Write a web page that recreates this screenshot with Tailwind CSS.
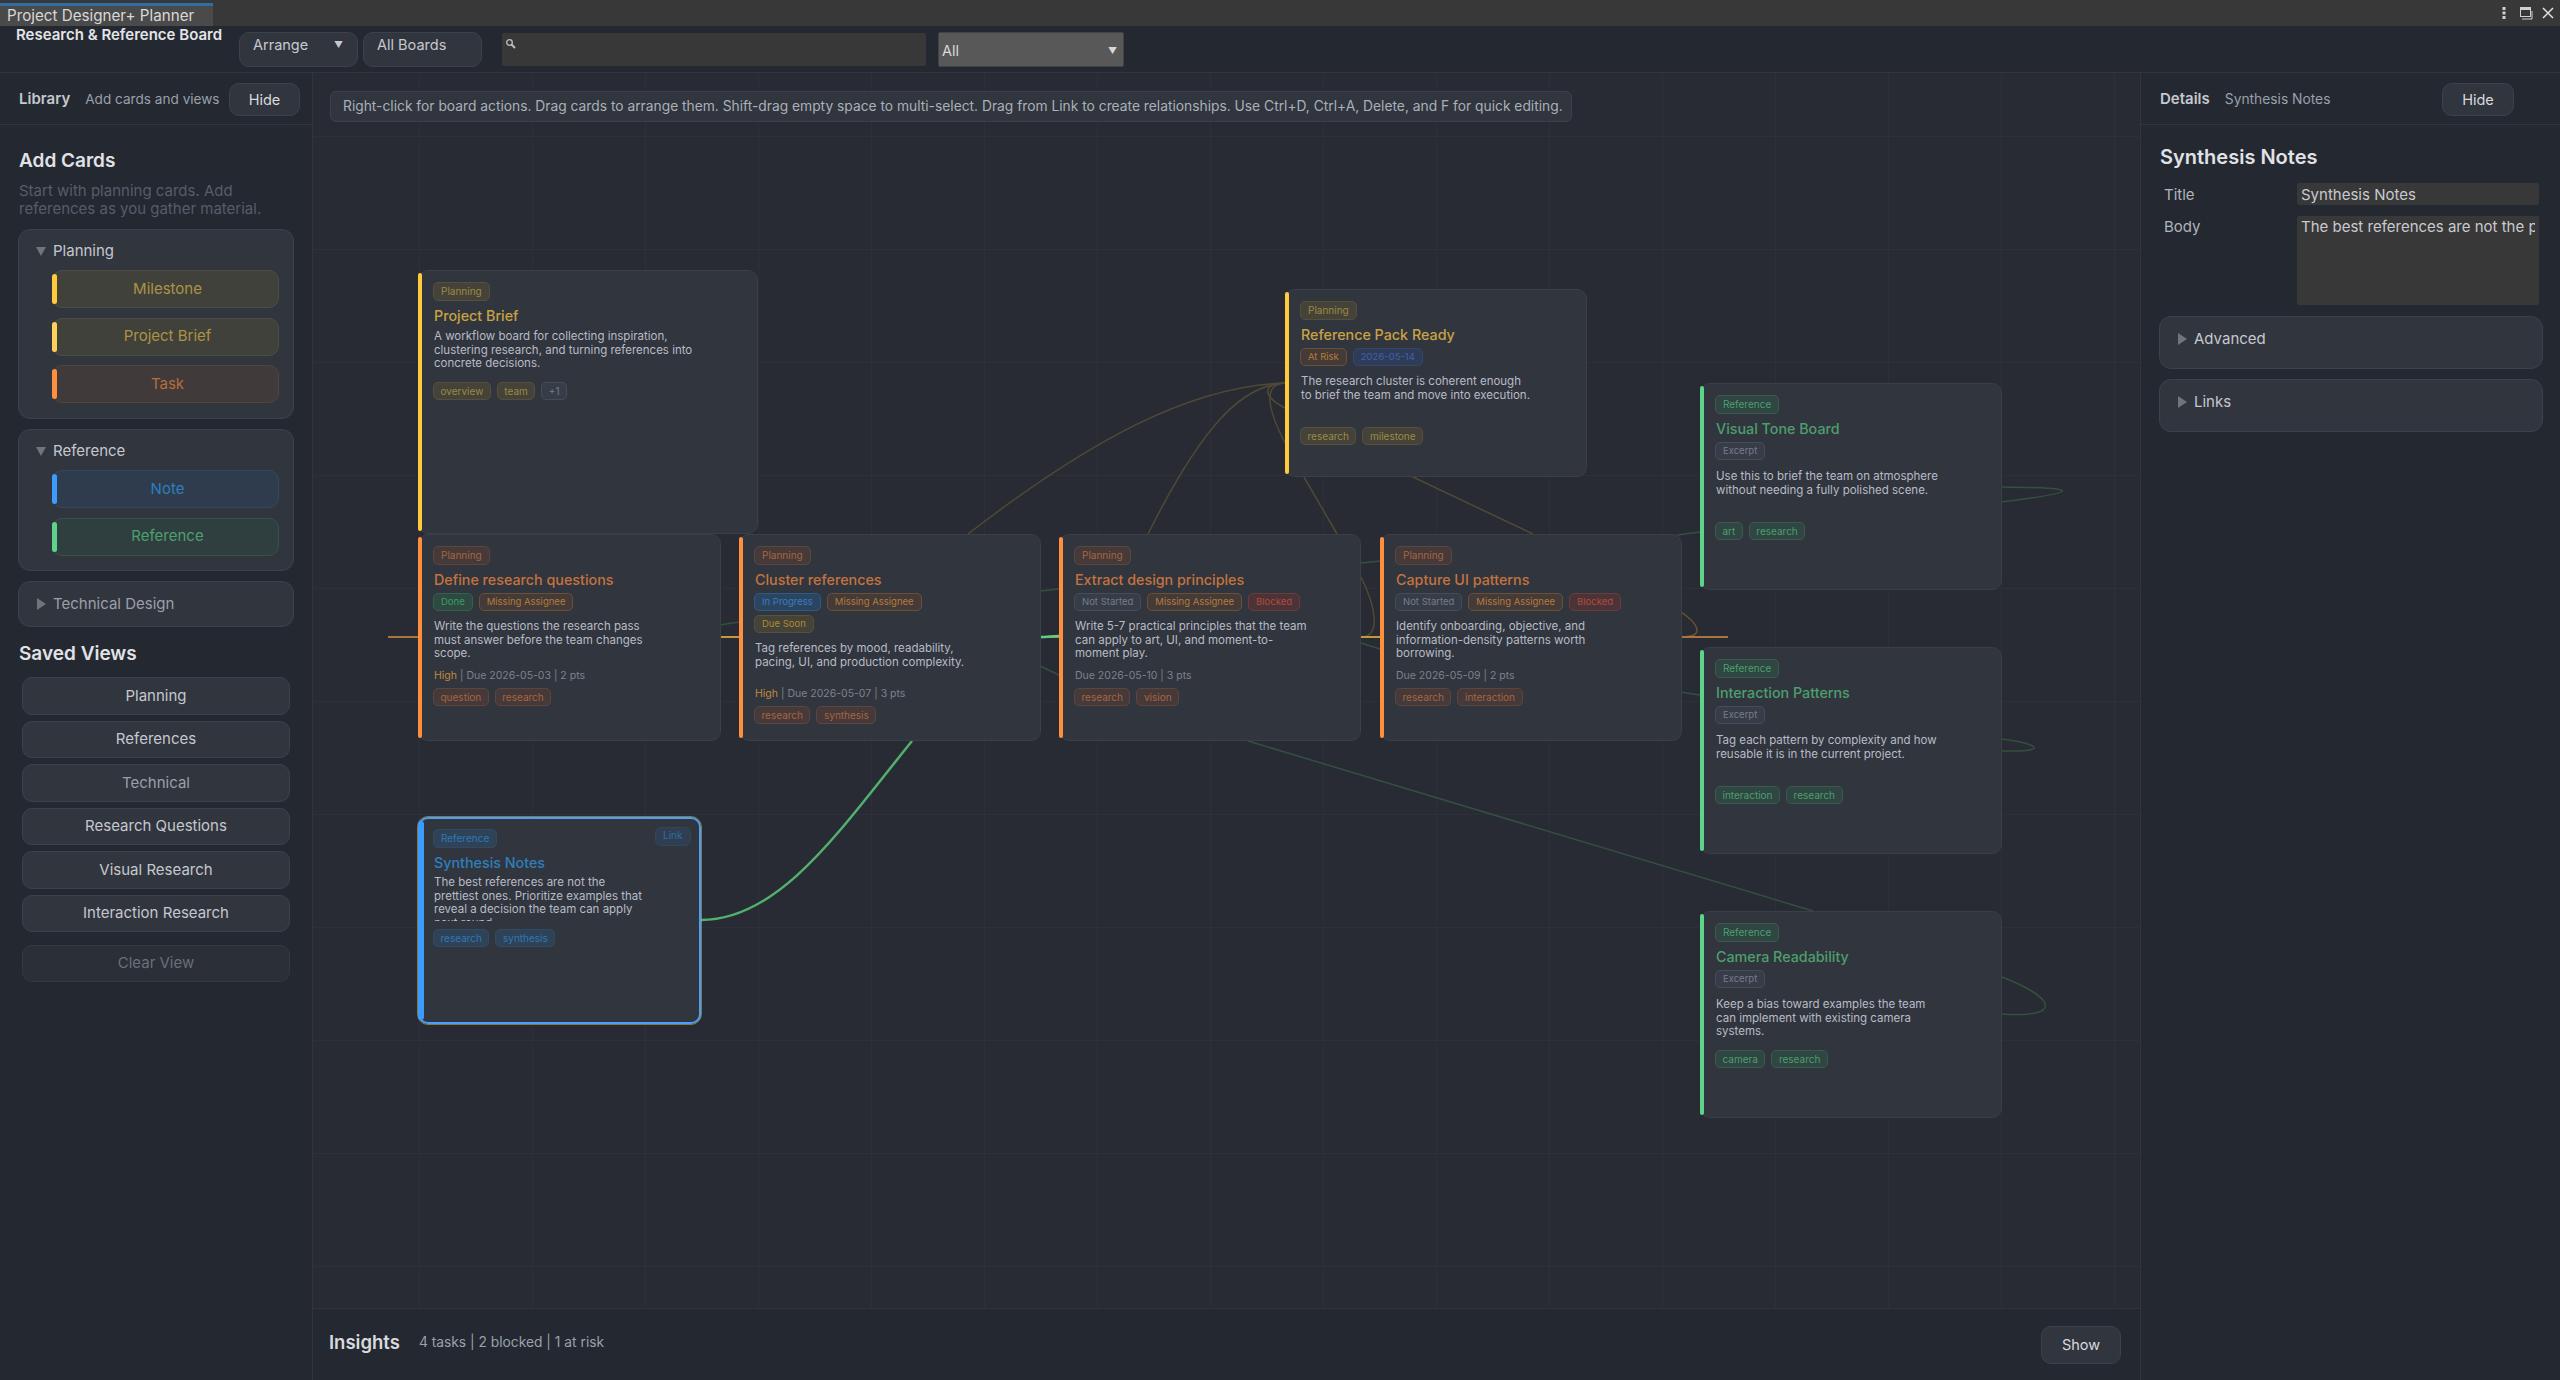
<!DOCTYPE html>
<html lang="en">
<head>
  <meta charset="UTF-8" />
  <title>Project Designer+ Planner</title>
  <script src="https://cdn.jsdelivr.net/npm/@tailwindcss/browser@4"></script>
</head>
<body class="h-[1380px] w-[2560px] overflow-hidden bg-[#242830] font-['Inter',sans-serif] text-[#c5c8cf] flex flex-col">

  <!-- window title bar -->
  <div class="h-[26px] shrink-0 bg-[#383838] flex items-end justify-between">
    <div class="h-[23px] w-[213px] bg-[#4a4a4a] border-t-[3px] border-[#2f6ea5] pl-[7px] text-[15.200px] leading-[20px] text-[#d8d8d8] whitespace-nowrap">Project Designer+ Planner</div>
    <div class="h-[26px] flex items-center gap-[8px] pr-[5px]">
      <svg width="14" height="14" viewBox="0 0 14 14" fill="#d0d0d0"><rect x="5.500" y="1" width="3" height="3"/><rect x="5.500" y="5.500" width="3" height="3"/><rect x="5.500" y="10" width="3" height="3"/></svg>
      <svg width="14" height="14" viewBox="0 0 14 14" fill="none" stroke="#d0d0d0"><rect x="1.500" y="1.500" width="10" height="9" stroke-width="1"/><path d="M1 3h11" stroke-width="2"/><path d="M13 5v8H3" stroke-width="1"/></svg>
      <svg width="14" height="14" viewBox="0 0 14 14" fill="none" stroke="#e0e0e0" stroke-width="1.500"><path d="M2 2l10 10M12 2L2 12"/></svg>
    </div>
  </div>

  <!-- toolbar -->
  <div class="h-[47px] shrink-0 border-b border-[#31353e] flex items-start pl-[16px] relative">
    <div class="w-[223px] text-[15px] leading-[18px] font-semibold text-[#e2e4e8] whitespace-nowrap">Research &amp; Reference Board</div>
    <div class="mt-[6px] w-[119px] h-[35px] rounded-[10px] bg-[#31353e] border border-[#3c414c] flex items-start justify-between pl-[13px] pr-[14px] pt-[2px] text-[14.500px] leading-[20px] text-[#c5c8cf]">Arrange<span class="text-[9px] text-[#c5c8cf]">▼</span></div>
    <div class="ml-[5px] mt-[6px] w-[119px] h-[35px] rounded-[10px] bg-[#31353e] border border-[#3c414c] pl-[13px] pt-[2px] text-[14.500px] leading-[20px] text-[#c5c8cf]">All Boards</div>
    <div class="ml-[20px] mt-[7px] w-[424px] h-[33px] bg-[#383838] rounded-[2px] flex items-start pl-[3px] pt-[5px]">
      <svg width="12" height="12" viewBox="0 0 12 12" fill="none" stroke="#c0c0c0" stroke-width="1.300"><circle cx="4.500" cy="4.500" r="2.800"/><path d="M6.500 6.500l3.500 3.500" stroke-width="1.800"/></svg>
    </div>
    <div class="ml-[12px] mt-[6px] w-[186px] h-[35px] bg-[#585858] border border-[#444] rounded-[2px] flex items-end justify-between pl-[3px] pr-[6px] pb-[5px] text-[14.500px] leading-[20px] text-[#d8d8d8]">All<span class="text-[9px] text-[#d8d8d8]">▼</span></div>
  </div>

  <div class="flex-1 flex min-h-0">

    <!-- library panel -->
    <aside class="w-[313px] shrink-0 border-r border-[#31353e] flex flex-col">
      <div class="h-[52px] pt-[2px] border-b border-[#31353e] flex items-center pl-[19px] pr-[12px] whitespace-nowrap">
        <span class="text-[15px] font-semibold text-[#c5c8cf]">Library</span>
        <span class="ml-[15px] text-[13.600px] text-[#9aa0ac]">Add cards and views</span>
        <div class="ml-auto w-[71px] h-[33px] rounded-[10px] bg-[#31353e] border border-[#3c414c] flex items-center justify-center text-[14.500px] text-[#d8dade]">Hide</div>
      </div>
      <div class="pl-[18px] pr-[18px] flex flex-col">
        <h2 class="pl-[1px] mt-[25px] text-[19px] leading-[22px] font-semibold text-[#e0e2e6]">Add Cards</h2>
        <p class="pl-[1px] mt-[10px] text-[15px] leading-[18px] text-[#565d6a]">Start with planning cards. Add references as you gather material.</p>
        <div class="mt-[11px] h-[190px] rounded-[12px] bg-[#31353e] border border-[#3c414c] pl-[17px] pr-[14px]">
          <div id="groupPlanning"></div>
        </div>
        <div class="mt-[10px] h-[142px] rounded-[12px] bg-[#31353e] border border-[#3c414c] pl-[17px] pr-[14px]">
          <div id="groupReference"></div>
        </div>
        <div class="mt-[10px] h-[46px] rounded-[12px] bg-[#31353e] border border-[#3c414c] pl-[18px] flex items-center gap-[7px] text-[15px] text-[#9aa0ac]">
          <span class="w-0 h-0 border-y-[6px] border-y-transparent border-l-[9px] border-l-[#70747c]"></span>Technical Design
        </div>
        <h2 class="pl-[1px] mt-[16px] text-[19px] leading-[22px] font-semibold text-[#e0e2e6]">Saved Views</h2>
        <div id="savedViews" class="mt-[12px] ml-[4px] mr-[4px] flex flex-col gap-[6px]"></div>
        <div class="mt-[13px] mx-[4px] h-[37px] rounded-[10px] bg-[#2b2f37] border border-[#343841] flex items-center justify-center text-[15px] text-[#6a6f79]">Clear View</div>
      </div>
    </aside>

    <!-- board -->
    <main class="flex-1 min-w-0 flex flex-col">
      <div id="canvas" class="relative flex-1 overflow-hidden bg-[#282b33]">
        <svg class="absolute inset-0" width="1827" height="1235" viewBox="313 73 1827 1235" fill="none">
          <defs>
            <pattern id="grid" x="307" y="24" width="113" height="113" patternUnits="userSpaceOnUse">
              <path d="M113 0V113M0 113H113" stroke="#2e3139" stroke-width="1.500" />
            </pattern>
          </defs>
          <rect x="313" y="73" width="1827" height="1235" fill="url(#grid)" />
          <!-- relationships, in page coordinates -->
          <g stroke="#4f4a35" stroke-width="1.500">
            <path d="M1285 383C1190 386 1090 440 968 534" />
            <path d="M1285 383C1240 385 1200 430 1148 534" />
            <path d="M1285 383C1262 384 1262 396 1285 408" />
            <path d="M1285 383C1262 384 1268 410 1285 443" />
            <path d="M1304 477L1337 534" />
            <path d="M1413 477L1533 534" />
            <path d="M1361 577C1375 605 1382 637 1361 637" />
          </g>
          <path d="M1681 612C1696 622 1708 637 1681 637" stroke="#6b5433" stroke-width="1.500" />
          <g stroke="#a8763a" stroke-width="2">
            <path d="M388 637H418" />
            <path d="M1681 637H1728" />
          </g>
          <g stroke="#c8963f" stroke-width="2">
            <path d="M720 637H739" />
            <path d="M1361 637H1380" />
            <path d="M1040 637H1059" stroke="#a8883a" />
          </g>
          <g stroke="#34503f" stroke-width="1.500">
            <path d="M720 625L739 622" />
            <path d="M1040 591L1059 589" />
            <path d="M1040 666L1059 675" />
            <path d="M1361 563L1380 561" />
            <path d="M1361 643L1380 649" />
            <path d="M1677 535L1700 532" />
            <path d="M1680 692L1700 695" />
            <path d="M1248 741L1813 911" />
            <path d="M2002 487C2085 488 2080 492 2002 502" />
            <path d="M2002 739C2045 745 2045 752 2002 751" />
            <path d="M2002 977C2060 1000 2060 1018 2002 1014" />
          </g>
          <path d="M1040 637C1048 637 1052 636 1059 636" stroke="#5fcf86" stroke-width="2.500" />
          <path d="M701 920C780 920 840 830 912 741" stroke="#52b06e" stroke-width="2.500" />
        </svg>
        <div class="absolute left-[17px] top-[18px] h-[31px] w-[1242px] rounded-[6px] bg-[#31353e] border border-[#3c414c] flex items-center pl-[12px] text-[13.800px] text-[#aab0ba] whitespace-nowrap">Right-click for board actions. Drag cards to arrange them. Shift-drag empty space to multi-select. Drag from Link to create relationships. Use Ctrl+D, Ctrl+A, Delete, and F for quick editing.</div>
        <div id="cards"></div>
      </div>
      <div class="h-[72px] shrink-0 border-t border-[#31353e] flex items-center pl-[16px] pr-[19px]">
        <span class="mb-[4px] text-[18.500px] font-semibold text-[#d8dade]">Insights</span>
        <span class="mb-[4px] ml-[19px] text-[13.800px] text-[#9aa0ac]">4 tasks | 2 blocked | 1 at risk</span>
        <div class="ml-auto w-[80px] h-[38px] rounded-[10px] bg-[#31353e] border border-[#3c414c] flex items-center justify-center text-[14.500px] text-[#d8dade]">Show</div>
      </div>
    </main>

    <!-- details panel -->
    <aside class="w-[420px] shrink-0 border-l border-[#31353e] flex flex-col">
      <div class="h-[52px] pt-[2px] border-b border-[#31353e] flex items-center pl-[19px] pr-[46px] whitespace-nowrap">
        <span class="text-[15px] font-semibold text-[#c5c8cf]">Details</span>
        <span class="ml-[15px] text-[13.800px] text-[#9aa0ac]">Synthesis Notes</span>
        <div class="ml-auto w-[72px] h-[33px] rounded-[10px] bg-[#31353e] border border-[#3c414c] flex items-center justify-center text-[14.500px] text-[#d8dade]">Hide</div>
      </div>
      <div class="pl-[18px] pr-[17px]">
        <h2 class="pl-[1px] mt-[21px] text-[20px] leading-[22px] font-semibold text-[#e0e2e6]">Synthesis Notes</h2>
        <div class="mt-[15px] h-[22px] flex">
          <span class="w-[138px] pl-[5px] text-[15px] leading-[24px] text-[#b0b4bc]">Title</span>
          <div class="w-[242px] h-[22px] bg-[#383838] rounded-[2px] pl-[4px] text-[15px] leading-[24px] text-[#c8cad0] overflow-hidden">Synthesis Notes</div>
        </div>
        <div class="mt-[11px] flex">
          <span class="w-[138px] pl-[5px] text-[15px] leading-[22px] text-[#b0b4bc]">Body</span>
          <div class="w-[242px] h-[89px] bg-[#383838] rounded-[2px] pl-[4px] pr-[4px] overflow-hidden"><div class="w-[234px] overflow-hidden whitespace-nowrap text-[15px] leading-[21px] text-[#c8cad0]">The best references are not the prettiest ones.</div></div>
        </div>
        <div class="mt-[11px] h-[53px] rounded-[12px] bg-[#31353e] border border-[#3c414c] pl-[18px] pt-[12px] flex items-start gap-[7px] text-[15px] leading-[20px] text-[#c5c8cf]">
          <span class="mt-[4px] w-0 h-0 border-y-[6px] border-y-transparent border-l-[9px] border-l-[#70747c]"></span>Advanced
        </div>
        <div class="mt-[10px] h-[53px] rounded-[12px] bg-[#31353e] border border-[#3c414c] pl-[18px] pt-[12px] flex items-start gap-[7px] text-[15px] leading-[20px] text-[#c5c8cf]">
          <span class="mt-[4px] w-0 h-0 border-y-[6px] border-y-transparent border-l-[9px] border-l-[#70747c]"></span>Links
        </div>
      </div>
    </aside>
  </div>

<script>
  // Accent colours per card family
  const kinds = {
    yellow: { bar: "bg-[#ffcb3d]", title: "text-[#c9a243]", badge: "bg-[#45423a] border-[#55503c] text-[#9c8a42]" },
    orange: { bar: "bg-[#ff8f3c]", title: "text-[#c4733e]", badge: "bg-[#46393a] border-[#5c463c] text-[#a8663c]" },
    green: { bar: "bg-[#5fd38a]", title: "text-[#4d9f6c]", badge: "bg-[#2f4643] border-[#3a5a4c] text-[#4d9f6c]" },
    blue: { bar: "bg-[#3d9bff]", title: "text-[#2f7fbd]", badge: "bg-[#2f4358] border-[#34495f] text-[#2f77b5]" },
  };

  const chips = {
    done: "bg-[#2d4a42] border-[#36604a] text-[#3f9a60]",
    progress: "bg-[#2b4560] border-[#2f5a85] text-[#3a7cc0]",
    missing: "bg-[#443a38] border-[#6b5038] text-[#b57c3c]",
    soon: "bg-[#45423a] border-[#5a5038] text-[#b08a30]",
    blocked: "bg-[#4a3438] border-[#6b3c3c] text-[#b8483c]",
    idle: "bg-[#363c48] border-[#454c5a] text-[#767d8a]",
    date: "bg-[#2f3c58] border-[#34466a] text-[#3f5fae]",
  };

  const cards = [
    { x: 418, y: 270, w: 340, h: 264, kind: "yellow", title: "Project Brief", body: "A workflow board for collecting inspiration,<br>clustering research, and turning references into<br>concrete decisions.", bodyTop: 3, tagGap: 11, tags: ["overview", "team"], more: "+1" },
    { x: 418, y: 534, w: 303, h: 207, kind: "orange", title: "Define research questions", chips: [["Done", "done"], ["Missing Assignee", "missing"]], body: "Write the questions the research pass<br>must answer before the team changes<br>scope.", high: true, meta: "Due 2026-05-03 | 2 pts", tags: ["question", "research"] },
    { x: 739, y: 534, w: 302, h: 207, kind: "orange", title: "Cluster references", chipW: 170, chips: [["In Progress", "progress"], ["Missing Assignee", "missing"], ["Due Soon", "soon"]], body: "Tag references by mood, readability,<br>pacing, UI, and production complexity.", bodyH: 37, high: true, meta: "Due 2026-05-07 | 3 pts", tags: ["research", "synthesis"] },
    { x: 1059, y: 534, w: 302, h: 207, kind: "orange", title: "Extract design principles", chips: [["Not Started", "idle"], ["Missing Assignee", "missing"], ["Blocked", "blocked"]], body: "Write 5-7 practical principles that the team<br>can apply to art, UI, and moment-to-<br>moment play.", meta: "Due 2026-05-10 | 3 pts", tags: ["research", "vision"] },
    { x: 1380, y: 534, w: 302, h: 207, kind: "orange", title: "Capture UI patterns", chips: [["Not Started", "idle"], ["Missing Assignee", "missing"], ["Blocked", "blocked"]], body: "Identify onboarding, objective, and<br>information-density patterns worth<br>borrowing.", meta: "Due 2026-05-09 | 2 pts", tags: ["research", "interaction"] },
    { x: 1285, y: 289, w: 302, h: 188, kind: "yellow", title: "Reference Pack Ready", chips: [["At Risk", "missing"], ["2026-05-14", "date"]], body: "The research cluster is coherent enough<br>to brief the team and move into execution.", tagGap: 11, tags: ["research", "milestone"] },
    { x: 1700, y: 383, w: 302, h: 207, kind: "green", title: "Visual Tone Board", chips: [["Excerpt", "idle"]], body: "Use this to brief the team on atmosphere<br>without needing a fully polished scene.", bodyTop: 10, tagGap: 11, tags: ["art", "research"] },
    { x: 1700, y: 647, w: 302, h: 207, kind: "green", title: "Interaction Patterns", chips: [["Excerpt", "idle"]], body: "Tag each pattern by complexity and how<br>reusable it is in the current project.", bodyTop: 10, tagGap: 11, tags: ["interaction", "research"] },
    { x: 1700, y: 911, w: 302, h: 207, kind: "green", title: "Camera Readability", chips: [["Excerpt", "idle"]], body: "Keep a bias toward examples the team<br>can implement with existing camera<br>systems.", bodyTop: 10, tagGap: 11, tags: ["camera", "research"] },
    { x: 418, y: 817, w: 283, h: 207, kind: "blue", selected: true, title: "Synthesis Notes", body: "The best references are not the<br>prettiest ones. Prioritize examples that<br>reveal a decision the team can apply<br>next round.", bodyH: 45, tagGap: 8, tags: ["research", "synthesis"] },
  ];

  function pill(text, cls) {
    return `<span class="h-[18px] px-[6.500px] rounded-[5px] border text-[10px] leading-[16px] whitespace-nowrap ${cls}">${text}</span>`;
  }

  function statusPill(text, cls) {
    return `<span class="h-[18px] px-[7px] rounded-[5px] border text-[9.500px] leading-[16px] whitespace-nowrap ${cls}">${text}</span>`;
  }

  function renderCard(c) {
    const k = kinds[c.kind];
    const top = c.bodyTop || (c.chips ? 9 : 2);
    const chipRow = c.chips ? `<div class="mt-[2px] flex flex-wrap gap-x-[6px] gap-y-[4px]" style="width:${c.chipW || 240}px">${c.chips.map(([t, s]) => statusPill(t, chips[s])).join("")}</div>` : "";
    const metaRow = c.meta ? `<div class="mt-[6px] h-[18px] pl-[1px] text-[10.500px] leading-[18px] text-[#7d828c] whitespace-nowrap">${c.high ? '<span class="text-[#c08a3c]">High</span> | ' : ""}${c.meta}</div>` : "";
    const gap = c.tagGap || (c.meta ? 3 : 12);
    const tagRow = `<div class="flex gap-[6px]" style="margin-top:${gap}px">${c.tags.map(t => pill(t, k.badge)).join("")}${c.more ? pill(c.more, chips.idle) : ""}</div>`;
    const frame = c.selected ? "border-[2px] border-[#4a9eff] outline outline-[#b8b45a]/60" : "border border-[#3a3f48]";
    const link = c.selected ? `<span class="absolute right-[8px] top-[8px] h-[19px] w-[36px] rounded-[6px] bg-[#2f3e50] border border-[#344659] text-[10px] leading-[14px] pl-[7px] text-[#2f6ea5]">Link</span>` : "";
    const badge = c.kind === "yellow" || c.kind === "orange" ? "Planning" : "Reference";
    return `
      <div class="absolute rounded-[10px] bg-[#31353e] ${frame}" style="left:${c.x - 313}px;top:${c.y - 73}px;width:${c.w}px;height:${c.h}px">
        <div class="absolute ${c.selected ? "left-[-2px] w-[6px]" : "left-[-1px] w-[4px]"} top-[2px] bottom-[2px] rounded-full ${k.bar}"></div>
        ${link}
        <div class="${c.selected ? "pl-[13px] pt-[10px]" : "pl-[14px] pt-[11px]"}">
          <div class="flex"><span class="h-[19px] px-[7px] rounded-[5px] border text-[10px] leading-[17px] whitespace-nowrap ${k.badge}">${badge}</span></div>
          <div class="mt-[4px] pl-[1px] text-[14.300px] leading-[22px] font-medium ${k.title}">${c.title}</div>
          ${chipRow}
          <p class="pl-[1px] text-[11.500px] leading-[13.700px] text-[#b8bcc6] overflow-hidden whitespace-nowrap" style="margin-top:${top}px;height:${c.bodyH || 41}px">${c.body}</p>
          ${metaRow}
          ${tagRow}
        </div>
      </div>`;
  }

  document.getElementById("cards").innerHTML = cards.map(renderCard).join("");

  // Library groups
  function groupHtml(name, items) {
    const btn = {
      Milestone: ["bg-[#41413c] border-[#4e4e44] text-[#ac9343]", "bg-[#ffcb3d]"],
      "Project Brief": ["bg-[#41413c] border-[#4e4e44] text-[#ac9343]", "bg-[#ffcf5a]"],
      Task: ["bg-[#413a3a] border-[#50453f] text-[#b56e3e]", "bg-[#ff8f3c]"],
      Note: ["bg-[#2e3c4e] border-[#36475b] text-[#2f7fbd]", "bg-[#3d9bff]"],
      Reference: ["bg-[#2f3f40] border-[#3a4f4a] text-[#4d9f6c]", "bg-[#5fd38a]"],
    };
    return `<div class="h-[40px] pt-[2px] flex items-center gap-[7px] text-[15px] text-[#c5c8cf]"><span class="w-0 h-0 border-x-[5px] border-x-transparent border-t-[9px] border-t-[#70747c]"></span>${name}</div>
      <div class="flex flex-col gap-[9.500px]">${items.map(i => `<div class="relative ml-[16px] h-[38px] pl-[4px] rounded-[10px] border flex items-center justify-center text-[15px] ${btn[i][0]}"><span class="absolute left-[-1px] top-[3px] bottom-[3px] w-[5px] rounded-full ${btn[i][1]}"></span>${i}</div>`).join("")}</div>`;
  }
  document.getElementById("groupPlanning").innerHTML = groupHtml("Planning", ["Milestone", "Project Brief", "Task"]);
  document.getElementById("groupReference").innerHTML = groupHtml("Reference", ["Note", "Reference"]);

  document.getElementById("savedViews").innerHTML = ["Planning", "References", "Technical", "Research Questions", "Visual Research", "Interaction Research"]
    .map(v => `<div class="h-[37.500px] rounded-[10px] bg-[#31353e] border border-[#3c414c] flex items-center justify-center text-[15px] ${v === "Technical" ? "text-[#9aa0ac]" : "text-[#c5c8cf]"}">${v}</div>`).join("");
</script>

</body>
</html>
